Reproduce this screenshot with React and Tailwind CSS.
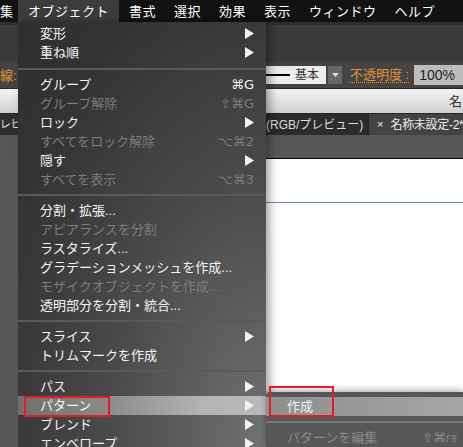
import React from "react";

const Arrow = () => (
  <svg width="9" height="11" viewBox="0 0 9 11" className="block">
    <path d="M0 0 L9 5.5 L0 11 Z" fill="#f2f2f2" />
  </svg>
);

const Item = ({ label, disabled, sub, shortcut }) => (
  <div className="h-[19px] flex items-center pl-[22px] pr-[12px]">
    <span className={disabled ? "flex-1 text-[#7c7c7c]" : "flex-1 text-[#f4f4f4]"}>{label}</span>
    {sub && <Arrow />}
    {shortcut && (
      <span className={`font-['DejaVu_Sans','Liberation_Sans',sans-serif] text-[13px] ${disabled ? "text-[#7c7c7c]" : "text-[#f4f4f4]"}`}>
        {shortcut}
      </span>
    )}
  </div>
);

const Sep = ({ h = "h-[12px]" }) => (
  <div className={`${h} flex items-center`}>
    <div className="h-[2px] w-full bg-[#5a5a5a]" />
  </div>
);

export default function App() {
  const menus = ["書式", "選択", "効果", "表示", "ウィンドウ", "ヘルプ"];
  return (
    <div className="relative w-[463px] h-[447px] overflow-hidden bg-[#575757] font-['Liberation_Sans','Noto_Sans_CJK_JP',sans-serif] text-[13px] leading-none">
      {/* menu bar */}
      <div className="h-[22px] bg-[#121212] flex items-center text-white">
        <span className="w-[18px] shrink-0">集</span>
        <span className="h-full flex items-center px-[10px] bg-[#3c3c3c] tracking-[0.5px] shrink-0">オブジェクト</span>
        <div className="flex gap-[18px] ml-[10px] whitespace-nowrap">
          {menus.map((m) => (
            <span key={m} className="tracking-[0.5px]">{m}</span>
          ))}
        </div>
      </div>

      {/* control area */}
      <div className="h-[66px] bg-[#3b3b3b] flex flex-col">
        <div className="h-[3px] bg-[#2e2e2e]" />
        <div className="flex-1" />
        <div className="h-[26px] bg-[#444] flex items-center whitespace-nowrap">
          <span className="text-[#e8922e] w-[18px] shrink-0 overflow-hidden">線:</span>
          <div className="ml-[248px] flex items-center h-[18px] shrink-0">
            <div className="w-[60px] h-full bg-[#ececec] flex items-center shrink-0">
              <div className="w-[24px] h-[2px] bg-black" />
              <span className="ml-[5px] text-[#333] text-[12px]">基本</span>
            </div>
            <div className="ml-[2px] w-[14px] h-full bg-[#676767] flex items-center justify-center shrink-0">
              <svg width="7" height="4" viewBox="0 0 7 4"><path d="M0 0 L7 0 L3.5 4 Z" fill="#ddd" /></svg>
            </div>
            <span className="ml-[8px] text-[#e8922e] border-b border-dotted border-[#e8922e] pb-[1px] shrink-0">不透明度 :</span>
            <div className="ml-[5px] w-[60px] h-[20px] bg-[#bdbdbd] flex items-center pl-[5px] text-[#222] text-[14px] shrink-0">100%</div>
          </div>
        </div>
      </div>

      {/* panel header */}
      <div className="h-[25px] bg-[linear-gradient(#f4f4f4,#d0d0d0)] flex items-center justify-end text-[#333] border-t border-[#2a2a2a]">
        <span className="mr-[1px]">名</span>
      </div>

      {/* tabs */}
      <div className="h-[22px] bg-[#262626] flex items-end whitespace-nowrap">
        <div className="h-[21px] w-[18px] shrink-0 bg-[#2e2e2e] flex items-center text-[#ddd] text-[11px] overflow-hidden">
          <span className="-ml-[15px]">(プレビ</span>
        </div>
        <div className="ml-[248px] h-[21px] w-[101px] shrink-0 bg-[#2c2c2c] flex items-center text-[#ddd] text-[12px]">
          <span>(RGB/プレビュー)</span>
        </div>
        <div className="ml-[2px] h-[21px] flex-1 bg-[#434343] flex items-center text-[#eee] gap-[7px] pl-[8px]">
          <span className="text-[11px]">×</span>
          <span className="text-[12px] tracking-[-0.3px]">名称未設定-2*</span>
        </div>
      </div>

      <div className="h-[23px] bg-[#575757]" />

      {/* canvas row */}
      <div className="flex h-[289px]">
        <div className="w-[266px] shrink-0 bg-[#595959]" />
        <div className="flex-1 bg-white border-t border-black">
          <div className="h-[43px]" />
          <div className="h-[1px] bg-[#6c8cc8]" />
        </div>
      </div>

      {/* main dropdown */}
      <div className="absolute left-[18px] top-[22px] w-[248px] bottom-0 pt-[2px] bg-[radial-gradient(ellipse_at_100%_100%,#727272_0%,#4a4a4a_45%,#333_80%,#2e2e2e_100%)] shadow-[4px_0_8px_rgba(0,0,0,0.35)]">
        <Item label="変形" sub />
        <Item label="重ね順" sub />
        <Sep h="h-[13px]" />
        <Item label="グループ" shortcut="⌘G" />
        <Item label="グループ解除" disabled shortcut="⇧⌘G" />
        <Item label="ロック" sub />
        <Item label="すべてをロック解除" disabled shortcut="⌥⌘2" />
        <Item label="隠す" sub />
        <Item label="すべてを表示" disabled shortcut="⌥⌘3" />
        <Sep />
        <Item label="分割・拡張..." />
        <Item label="アピアランスを分割" disabled />
        <Item label="ラスタライズ..." />
        <Item label="グラデーションメッシュを作成..." />
        <Item label="モザイクオブジェクトを作成..." disabled />
        <Item label="透明部分を分割・統合..." />
        <Sep />
        <Item label="スライス" sub />
        <Item label="トリムマークを作成" />
        <Sep />
        <Item label="パス" sub />
        <div className="bg-[linear-gradient(90deg,#6e6e6e_0%,#8a8a8a_35%,#b4b4b4_75%,#bababa_100%)]">
          <Item label="パターン" sub />
        </div>
        <Item label="ブレンド" sub />
        <Item label="エンベロープ" sub />
      </div>

      {/* submenu */}
      <div className="absolute left-[266px] top-[392px] right-0 bottom-0 pt-[5px] rounded-tl-[4px] bg-[#575757] shadow-[0_-2px_6px_rgba(0,0,0,0.3)]">
        <div className="h-[19px] flex items-center pl-[21px] text-[#f4f4f4] bg-[linear-gradient(90deg,#8e8e8e,#a6a6a6)]">作成</div>
        <div className="h-[12px] flex items-center">
          <div className="h-[2px] w-full bg-[#777]" />
        </div>
        <div className="h-[19px] flex items-center pl-[21px] pr-[6px] text-[#8a8a8a]">
          <span className="flex-1">パターンを編集</span>
          <span className="font-['DejaVu_Sans',sans-serif]">⇧⌘<span className="text-[9px]">F8</span></span>
        </div>
      </div>

      {/* red highlight boxes */}
      <div className="absolute left-[24px] top-[396px] w-[86px] h-[21px] border-2 border-[#e51c23]" />
      <div className="absolute left-[269px] top-[386px] w-[65px] h-[31px] border-2 border-[#e51c23]" />
    </div>
  );
}
